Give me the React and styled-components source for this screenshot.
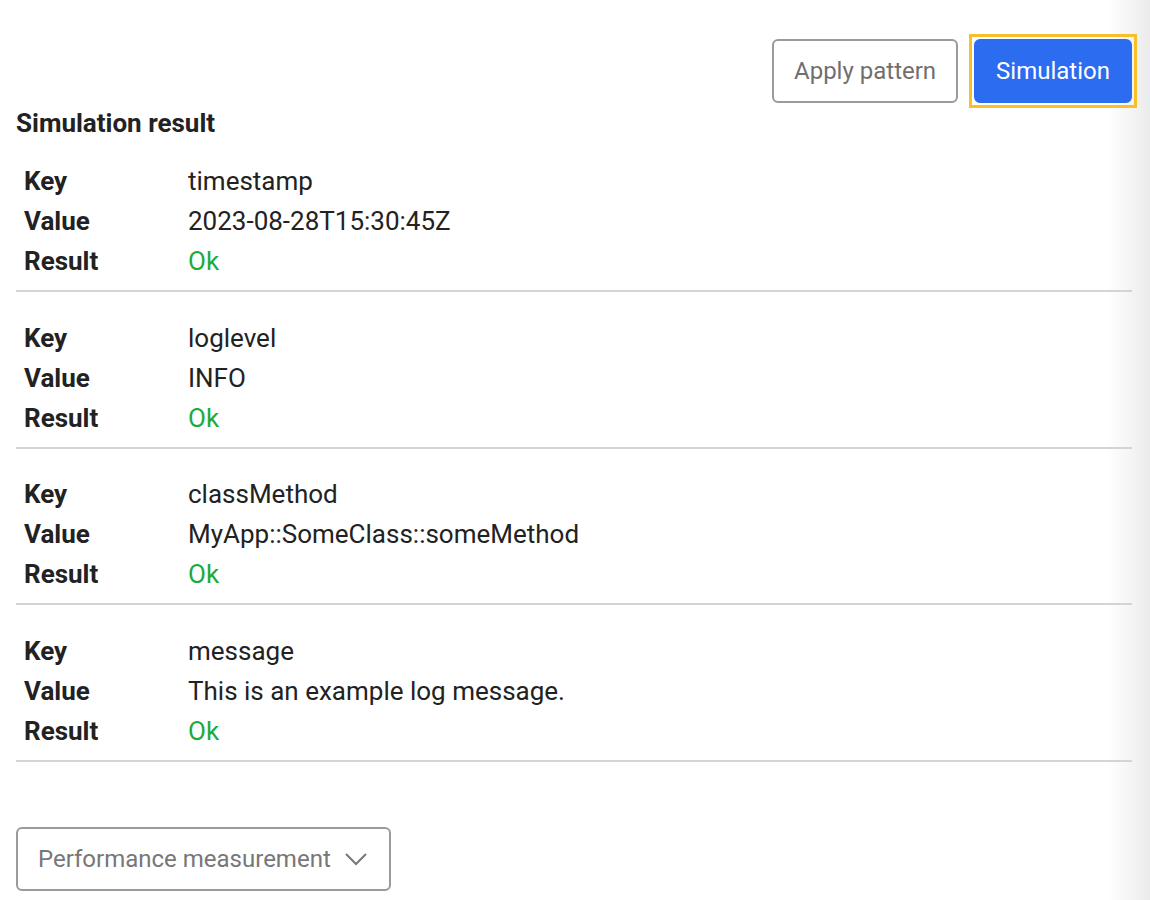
import React from "react";
import styled, { createGlobalStyle } from "styled-components";

const GlobalStyle = createGlobalStyle`
  html, body {
    margin: 0;
    padding: 0;
  }
  body {
    font-family: Roboto, "Liberation Sans", sans-serif;
    color: #222;
    background: linear-gradient(to right, #fff calc(100% - 42px), #ebebeb 100%);
    min-height: 900px;
  }
`;

const Page = styled.div`
  padding: 39px 18px 0 16px;
  display: flex;
  flex-direction: column;
`;

const Toolbar = styled.div`
  display: flex;
  justify-content: flex-end;
  gap: 16px;
`;

const Button = styled.button`
  position: relative;
  font-family: inherit;
  font-size: 24px;
  height: 64px;
  padding: 0 20px;
  border-radius: 6px;
  cursor: pointer;
  outline: none;
  border: 2px solid ${(p) => (p.$primary ? "#2b6cf0" : "#9a9a9a")};
  background: ${(p) => (p.$primary ? "#2b6cf0" : "#fff")};
  color: ${(p) => (p.$primary ? "#fff" : "#6f6f6f")};

  ${(p) =>
    p.$focused &&
    `
    &::after {
      content: "";
      position: absolute;
      inset: -7px;
      border: 3px solid #f7bf2a;
    }
  `}
`;

const Title = styled.h3`
  margin: 4px 0 0;
  font-size: 26px;
  font-weight: 700;
  line-height: 32px;
`;

const Groups = styled.div`
  margin-top: 22px;
`;

const Group = styled.div`
  display: grid;
  grid-template-columns: 164px 1fr;
  padding: ${(p) => (p.$first ? "0" : "25.6px")} 0 9px 8px;
  border-bottom: 2px solid #d4d4d4;
  font-size: 26px;
  line-height: 40px;
`;

const Label = styled.div`
  font-weight: 700;
`;

const Value = styled.div`
  color: ${(p) => (p.$ok ? "#1aab3c" : "#222")};
`;

const Dropdown = styled.button`
  margin-top: 65px;
  align-self: flex-start;
  display: flex;
  align-items: center;
  gap: 13px;
  height: 64px;
  padding: 0 21px 0 20px;
  font-family: inherit;
  font-size: 24px;
  color: #777;
  background: #fff;
  border: 2px solid #9a9a9a;
  border-radius: 6px;
`;

const rows = [
  { key: "timestamp", value: "2023-08-28T15:30:45Z" },
  { key: "loglevel", value: "INFO" },
  { key: "classMethod", value: "MyApp::SomeClass::someMethod" },
  { key: "message", value: "This is an example log message." },
];

export default function App() {
  return (
    <>
      <GlobalStyle />
      <Page>
        <Toolbar>
          <Button>Apply pattern</Button>
          <Button $primary $focused>
            Simulation
          </Button>
        </Toolbar>
        <Title>Simulation result</Title>
        <Groups>
          {rows.map((r, i) => (
            <Group key={r.key} $first={i === 0}>
              <Label>Key</Label>
              <Value>{r.key}</Value>
              <Label>Value</Label>
              <Value>{r.value}</Value>
              <Label>Result</Label>
              <Value $ok>Ok</Value>
            </Group>
          ))}
        </Groups>
        <Dropdown>
          Performance measurement
          <svg width="24" height="14" viewBox="0 0 24 14" fill="none" stroke="#777" strokeWidth="2">
            <path d="M2 2l10 10L22 2" />
          </svg>
        </Dropdown>
      </Page>
    </>
  );
}
